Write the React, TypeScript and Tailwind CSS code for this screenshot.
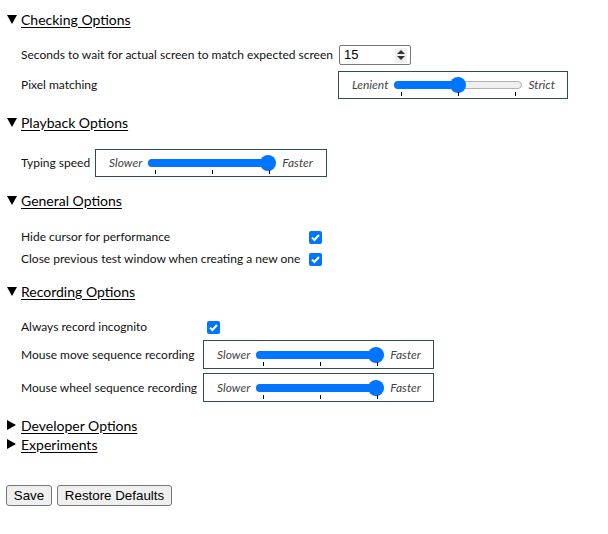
import React from "react";

const font = { fontFamily: 'Lato, "Noto Sans", sans-serif' };

function Tri({ open }: { open: boolean }) {
  return open ? (
    <svg width="10" height="9" viewBox="0 0 10 9" className="mr-[4px]">
      <path d="M0 0 H10 L5 9 Z" fill="#000" />
    </svg>
  ) : (
    <svg width="9" height="10" viewBox="0 0 9 10" className="mr-[5px]">
      <path d="M0 0 L9 5 L0 10 Z" fill="#000" />
    </svg>
  );
}

function Heading({ text, open }: { text: string; open: boolean }) {
  return (
    <div className="relative -top-[2px] flex items-center h-[20px] pl-[7px]">
      <Tri open={open} />
      <span className="text-[14px] underline underline-offset-2 text-black whitespace-nowrap">{text}</span>
    </div>
  );
}

function Check() {
  return (
    <div className="w-[13px] h-[13px] rounded-[2px] bg-[#0075ff] flex items-center justify-center">
      <svg width="11" height="11" viewBox="0 0 11 11">
        <path d="M2 5.6 L4.4 8 L9 3" stroke="#fff" strokeWidth="2" fill="none" />
      </svg>
    </div>
  );
}

function Slider({ value }: { value: number }) {
  const w = 128;
  const min = 8;
  const max = w - 8;
  const pos = min + (max - min) * value;
  return (
    <div className="relative w-[128px] h-[16px]">
      <div className="absolute left-0 right-0 top-[4px] h-[8px] rounded-full bg-[#efefef] border border-[#b2b2b2]" />
      <div
        className="absolute left-0 top-[4px] h-[8px] rounded-full bg-[#0075ff]"
        style={{ width: pos + 2 }}
      />
      <div
        className="absolute top-0 w-[16px] h-[16px] rounded-full bg-[#0075ff]"
        style={{ left: pos - 8 }}
      />
      <div className="absolute top-[15px] left-[7px] w-px h-[4px] bg-black" />
      <div className="absolute top-[15px] left-[64px] w-px h-[4px] bg-black" />
      <div className="absolute top-[15px] left-[121px] w-px h-[4px] bg-black" />
    </div>
  );
}

function SliderBox({ l, r, value, w, h }: { l: string; r: string; value: number; w: string; h: string }) {
  return (
    <div className={`flex items-center border border-[#2f4f4f] pl-[13px] gap-[6px] ${w} ${h}`}>
      <span className="italic text-[#444] text-[12px] whitespace-nowrap">{l}</span>
      <Slider value={value} />
      <span className="italic text-[#444] text-[12px] whitespace-nowrap">{r}</span>
    </div>
  );
}

export default function App() {
  return (
    <div className="w-[608px] h-[534px] bg-white text-[12px] text-[#111] pt-[11px]" style={font}>
      {/* Checking */}
      <Heading text="Checking Options" open />
      <div className="pl-[21px] mt-[14px]">
        <div className="flex items-center h-[20px]">
          <div className="w-[318px] whitespace-nowrap">Seconds to wait for actual screen to match expected screen</div>
          <div className="w-[72px] h-[20px] border border-[#767676] rounded-[2px] flex items-center pl-[4px] pr-[3px]">
            <span className="flex-1 text-[13px] text-black" style={{ fontFamily: '"Liberation Sans", Arial, sans-serif' }}>15</span>
            <div className="w-[12px] h-[15px] bg-[#efefef] flex flex-col items-center justify-center gap-[2px]">
              <svg width="8" height="4" viewBox="0 0 8 4"><path d="M0 4 L4 0 L8 4 Z" fill="#333" /></svg>
              <svg width="8" height="4" viewBox="0 0 8 4"><path d="M0 0 L8 0 L4 4 Z" fill="#333" /></svg>
            </div>
          </div>
        </div>
        <div className="flex items-center mt-[6px]">
          <div className="w-[317px] whitespace-nowrap">Pixel matching</div>
          <SliderBox l="Lenient" r="Strict" value={0.5} w="w-[230px]" h="h-[28px]" />
        </div>
      </div>

      {/* Playback */}
      <div className="mt-[15px]">
        <Heading text="Playback Options" open />
      </div>
      <div className="pl-[21px] mt-[15px] flex items-center">
        <div className="w-[74px] whitespace-nowrap">Typing speed</div>
        <SliderBox l="Slower" r="Faster" value={1} w="w-[232px]" h="h-[28px]" />
      </div>

      {/* General */}
      <div className="mt-[15px]">
        <Heading text="General Options" open />
      </div>
      <div className="pl-[21px] mt-[15px]">
        <div className="flex items-center h-[20px]">
          <div className="w-[288px] whitespace-nowrap">Hide cursor for performance</div>
          <Check />
        </div>
        <div className="flex items-center h-[20px] mt-[2px]">
          <div className="w-[288px] whitespace-nowrap">Close previous test window when creating a new one</div>
          <Check />
        </div>
      </div>

      {/* Recording */}
      <div className="mt-[14px]">
        <Heading text="Recording Options" open />
      </div>
      <div className="pl-[21px] mt-[14px]">
        <div className="flex items-center h-[20px]">
          <div className="w-[186px] whitespace-nowrap">Always record incognito</div>
          <Check />
        </div>
        <div className="flex items-center mt-[3px]">
          <div className="w-[182px] whitespace-nowrap">Mouse move sequence recording</div>
          <SliderBox l="Slower" r="Faster" value={1} w="w-[231px]" h="h-[29px]" />
        </div>
        <div className="flex items-center mt-[4px]">
          <div className="w-[182px] whitespace-nowrap">Mouse wheel sequence recording</div>
          <SliderBox l="Slower" r="Faster" value={1} w="w-[231px]" h="h-[29px]" />
        </div>
      </div>

      <div className="mt-[15px]">
        <Heading text="Developer Options" open={false} />
      </div>
      <div className="-mt-px">
        <Heading text="Experiments" open={false} />
      </div>

      <div
        className="flex gap-[5px] pl-[6px] mt-[29px]"
        style={{ fontFamily: '"Liberation Sans", Arial, sans-serif' }}
      >
        <button className="w-[46px] h-[21px] bg-[#efefef] border border-[#767676] rounded-[3px] text-[13.33px] text-black">
          Save
        </button>
        <button className="w-[115px] h-[21px] bg-[#efefef] border border-[#767676] rounded-[3px] text-[13.33px] text-black">
          Restore Defaults
        </button>
      </div>
    </div>
  );
}
